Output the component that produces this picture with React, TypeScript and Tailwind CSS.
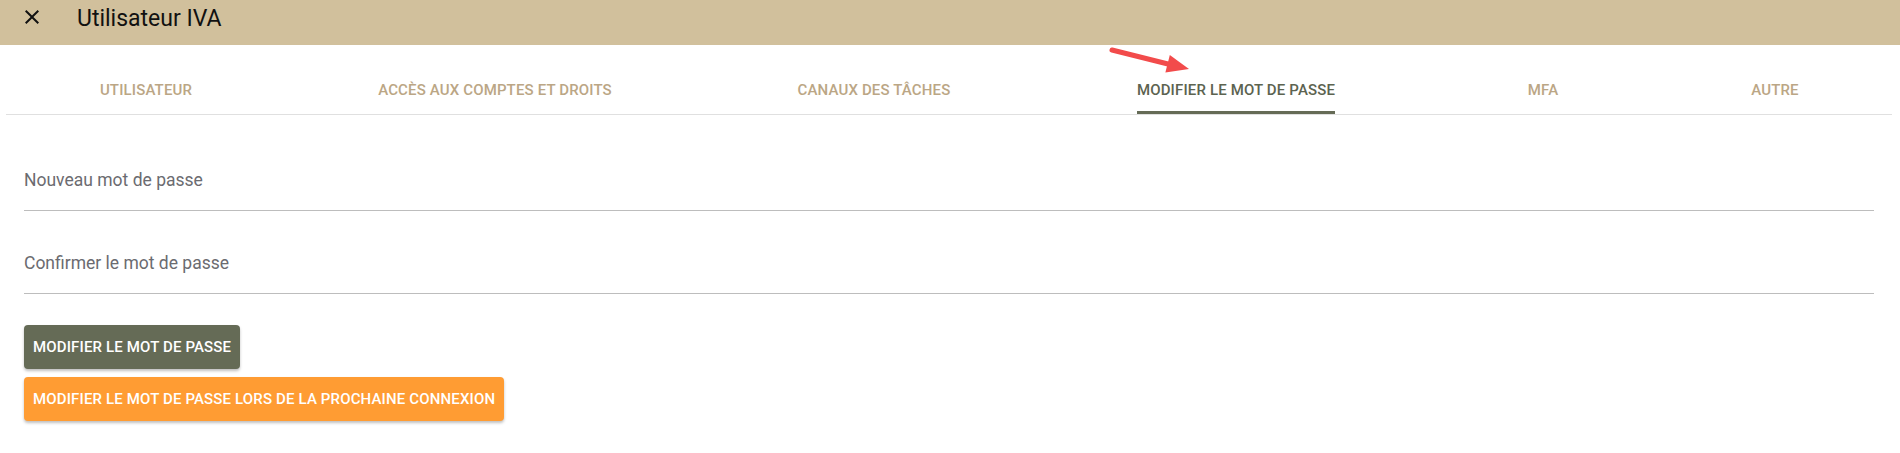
import React from "react";

const tabs = [
  { label: "UTILISATEUR", w: "w-[280px]" },
  { label: "ACCÈS AUX COMPTES ET DROITS", w: "w-[418px]" },
  { label: "CANAUX DES TÂCHES", w: "w-[340px]" },
  { label: "MODIFIER LE MOT DE PASSE", w: "w-[384px]" },
  { label: "MFA", w: "w-[230px]" },
  { label: "AUTRE", w: "w-[234px]" },
];

export default function App() {
  return (
    <div className="relative w-[1900px] h-[453px] bg-white overflow-hidden font-['Roboto','Liberation_Sans',sans-serif]">
      <div className="h-[45px] bg-[#d1c09c] flex items-start">
        <svg className="ml-[20px] mt-[5px] w-[24px] h-[24px]" viewBox="0 0 24 24">
          <path
            fill="#111"
            d="M19 6.41 17.59 5 12 10.59 6.41 5 5 6.41 10.59 12 5 17.59 6.41 19 12 13.41 17.59 19 19 17.59 13.41 12z"
          />
        </svg>
        <div className="ml-[33px] mt-[4px] text-[23px] leading-[30px] text-[#111]">Utilisateur IVA</div>
      </div>

      <div className="ml-[6px] w-[1886px] mt-[21px] flex border-b border-[#e0e0e0]">
        {tabs.map((t, i) => {
          const active = i === 3;
          return (
            <div key={t.label} className={t.w + " shrink-0 flex justify-center"}>
              <span
                className={
                  "relative h-[48px] flex items-center text-[15px] font-medium tracking-[0.01em] " +
                  (active ? "text-[#5c6350]" : "text-[#bba685]")
                }
              >
                {t.label}
                {active && <span className="absolute left-0 right-0 bottom-0 h-[3px] bg-[#656b56]" />}
              </span>
            </div>
          );
        })}
      </div>

      <div className="pl-[24px] pr-[26px] pt-[54px]">
        <div className="h-[42px] border-b border-[#bdbdbd] text-[17.5px] leading-[23px] text-[#6b6b70]">
          Nouveau mot de passe
        </div>
        <div className="mt-[41px] h-[42px] border-b border-[#bdbdbd] text-[17.5px] leading-[23px] text-[#6b6b70]">
          Confirmer le mot de passe
        </div>
      </div>

      <div className="pl-[24px] pt-[31px] flex flex-col items-start gap-[8px]">
        <button className="h-[44px] px-[9px] rounded-[4px] bg-[#656b56] text-white text-[15px] font-medium tracking-[0.01em] shadow-[0_2px_3px_rgba(0,0,0,0.25)]">
          MODIFIER LE MOT DE PASSE
        </button>
        <button className="h-[44px] px-[9px] rounded-[4px] bg-[#ff9c33] text-white text-[15px] font-medium tracking-[0.01em] shadow-[0_2px_3px_rgba(0,0,0,0.25)]">
          MODIFIER LE MOT DE PASSE LORS DE LA PROCHAINE CONNEXION
        </button>
      </div>

      <svg className="absolute left-[1100px] top-[40px] w-[100px] h-[40px]" viewBox="0 0 100 40">
        <line x1="12" y1="10" x2="70" y2="24.5" stroke="#f24b4b" strokeWidth="5" strokeLinecap="round" />
        <polygon points="89,29 69.8,15 65.4,32.4" fill="#f24b4b" />
      </svg>
    </div>
  );
}
